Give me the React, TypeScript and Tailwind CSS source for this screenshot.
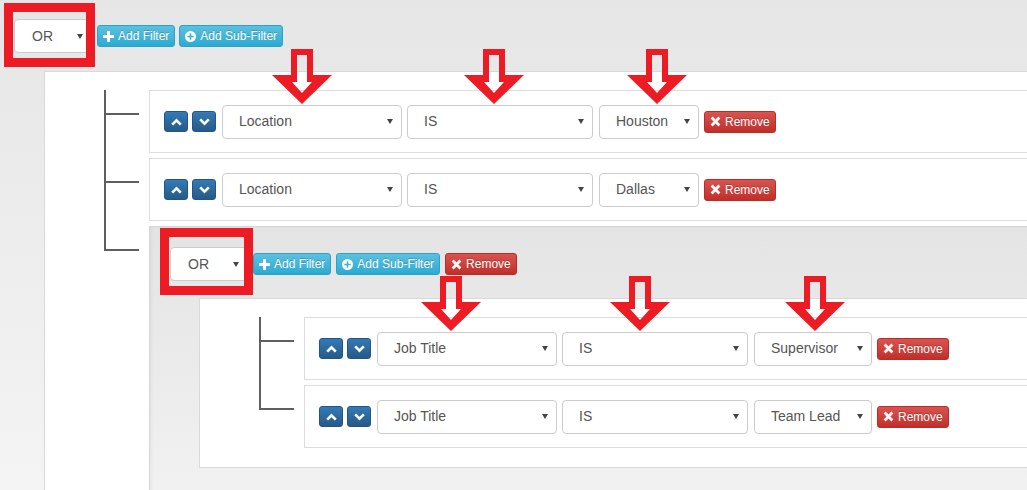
import type { ReactNode } from 'react';
import clsx from 'clsx';

// query builder: nested filter groups with rule rows

const line = 'border-[#5f5f5f]';

function Caret() {
  return (
    <svg width="6" height="5" viewBox="0 0 6 5" className="flex-none">
      <path d="M0 0h6L3 5z" fill="#444" />
    </svg>
  );
}

function Select({ label, className }: { label: string; className: string }) {
  return (
    <div
      className={clsx(
        'flex h-[34px] flex-none items-center justify-between rounded-[4px] border border-[#ccc] bg-white pl-[16px] pr-[8px] text-[14px] text-[#555]',
        className,
      )}
    >
      <span>{label}</span>
      <Caret />
    </div>
  );
}

const btn =
  'inline-flex h-[22px] flex-none items-center gap-[4px] rounded-[3px] border px-[5px] text-[12px] leading-none text-white [text-shadow:0_-1px_0_rgba(0,0,0,0.2)]';
const info = 'border-[#28a4c9] bg-linear-to-b from-[#5bc0de] to-[#2aabd2]';
const danger = 'border-[#b92c28] bg-linear-to-b from-[#d9534f] to-[#c12e2a]';
const primary = 'border-[#245580] bg-linear-to-b from-[#337ab7] to-[#265a88]';

function PlusIcon() {
  return (
    <svg width="11" height="11" viewBox="0 0 11 11">
      <path d="M4 0h3v4h4v3H7v4H4V7H0V4h4z" fill="#fff" />
    </svg>
  );
}

function PlusSignIcon() {
  return (
    <svg width="11" height="11" viewBox="0 0 11 11">
      <circle cx="5.5" cy="5.5" r="5.5" fill="#fff" />
      <path d="M4.7 2.3h1.6v2.4h2.4v1.6H6.3v2.4H4.7V6.3H2.3V4.7h2.4z" fill="#3bb4d8" />
    </svg>
  );
}

function RemoveIcon() {
  return (
    <svg width="11" height="11" viewBox="0 0 11 11">
      <path d="M1.6 1.6l7.8 7.8M9.4 1.6l-7.8 7.8" stroke="#fff" strokeWidth="2.8" />
    </svg>
  );
}

function AddFilter({ className }: { className?: string }) {
  return (
    <button className={clsx(btn, info, className)}>
      <PlusIcon />
      Add Filter
    </button>
  );
}

function AddSubFilter({ className }: { className?: string }) {
  return (
    <button className={clsx(btn, info, className)}>
      <PlusSignIcon />
      Add Sub-Filter
    </button>
  );
}

function Remove({ className }: { className?: string }) {
  return (
    <button className={clsx(btn, danger, className)}>
      <RemoveIcon />
      Remove
    </button>
  );
}

function MoveBtn({ dir, className }: { dir: 'up' | 'down'; className?: string }) {
  return (
    <button
      className={clsx(
        'flex h-[21px] w-[24px] flex-none items-center justify-center rounded-[3px] border',
        primary,
        className,
      )}
    >
      <svg width="11" height="8" viewBox="0 0 11 8">
        <path
          d={dir === 'up' ? 'M1.2 6.6L5.5 2.3l4.3 4.3' : 'M1.2 1.4l4.3 4.3 4.3-4.3'}
          stroke="#fff"
          strokeWidth="2.6"
          fill="none"
        />
      </svg>
    </button>
  );
}

function Rule({ field, value, valueW }: { field: string; value: string; valueW: string }) {
  return (
    <div className="flex h-[63px] items-center border border-[#ddd] bg-white pl-[14px]">
      <MoveBtn dir="up" />
      <MoveBtn dir="down" className="ml-[4px]" />
      <Select label={field} className="ml-[6px] w-[180px]" />
      <Select label="IS" className="ml-[5px] w-[186px]" />
      <Select label={value} className={clsx('ml-[6px]', valueW)} />
      <Remove className="ml-[5px]" />
    </div>
  );
}

// one entry of a rules list, with its connector to the tree line
function Branch({ last, children }: { last?: boolean; children: ReactNode }) {
  return (
    <div className="flex">
      <div className="flex w-[104px] flex-none flex-col pl-[59px]">
        <div className={clsx('h-[25px] w-[35px] flex-none border-b-2 border-l-2', line)} />
        {!last && <div className={clsx('flex-1 border-l-2', line)} />}
      </div>
      <div className="min-w-0 flex-1 pb-[5px]">{children}</div>
    </div>
  );
}

function Condition({ boxClass }: { boxClass: string }) {
  return (
    <div className="relative flex-none">
      <Select label="OR" className="w-[78px] pl-[17px]" />
      <div className={clsx('absolute border-[9px] border-[#ed1c24]', boxClass)} />
    </div>
  );
}

function Arrow({ className }: { className: string }) {
  return (
    <svg width="60" height="56" viewBox="0 0 60 56" className={clsx('absolute', className)}>
      <path
        fillRule="evenodd"
        fill="#ed1c24"
        d="M19 0h22v26h19L30 55 0 26h19z M25 6v27h-5l10 11 10-11h-5V6z"
      />
    </svg>
  );
}

export default function App() {
  return (
    <div className="relative h-[490px] w-[1027px] overflow-hidden bg-linear-to-b from-[#e6e6e6] to-[#f4f4f4] font-['Liberation_Sans',Arial,sans-serif]">
      <div className="flex h-full flex-col pt-[19px]">
        <div className="flex items-center pl-[14px]">
          <Condition boxClass="-left-[10px] -top-[16px] h-[64px] w-[91px]" />
          <AddFilter className="ml-[5px]" />
          <AddSubFilter className="ml-[4px]" />
        </div>

        <div className="mt-[18px] ml-[44px] w-[1100px] flex-1 border-l border-t border-[#d9d9d9] bg-white pt-[18px]">
          <Branch>
            <Rule field="Location" value="Houston" valueW="w-[100px]" />
          </Branch>
          <Branch>
            <Rule field="Location" value="Dallas" valueW="w-[100px]" />
          </Branch>
          <Branch last>
            <div className="h-[300px] border border-[#d6d6d6] bg-linear-to-b from-[#e4e4e4] to-[#f3f3f3] pl-[20px] pt-[20px] shadow-[inset_2px_0_3px_rgba(0,0,0,0.04)]">
              <div className="flex items-center">
                <Condition boxClass="-left-[10px] -top-[19px] h-[67px] w-[93px]" />
                <AddFilter className="ml-[5px]" />
                <AddSubFilter className="ml-[5px]" />
                <Remove className="ml-[5px]" />
              </div>
              <div className="mt-[17px] ml-[29px] border border-[#d9d9d9] bg-white pb-[14px] pt-[18px]">
                <Branch>
                  <Rule field="Job Title" value="Supervisor" valueW="w-[118px]" />
                </Branch>
                <Branch last>
                  <Rule field="Job Title" value="Team Lead" valueW="w-[118px]" />
                </Branch>
              </div>
            </div>
          </Branch>
        </div>
      </div>

      <Arrow className="left-[272px] top-[49px]" />
      <Arrow className="left-[464px] top-[49px]" />
      <Arrow className="left-[627px] top-[49px]" />
      <Arrow className="left-[421px] top-[276px]" />
      <Arrow className="left-[610px] top-[276px]" />
      <Arrow className="left-[785px] top-[276px]" />
    </div>
  );
}
